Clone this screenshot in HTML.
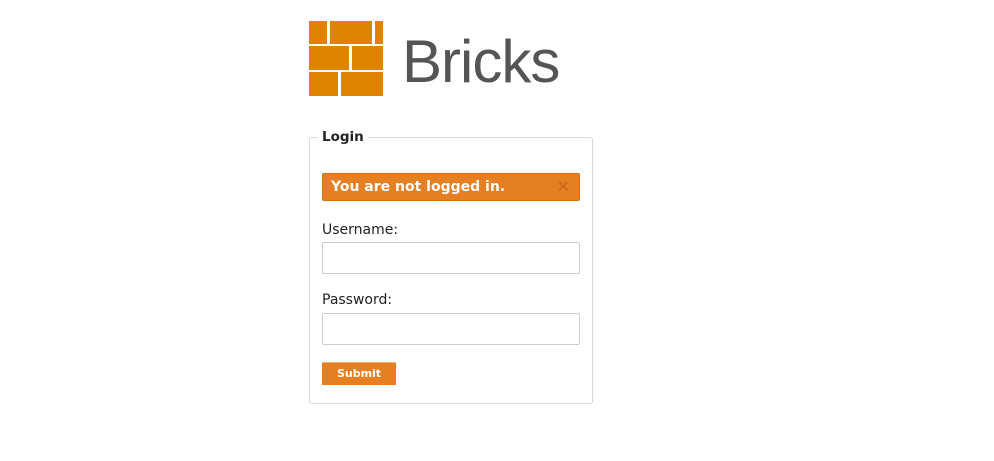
<!DOCTYPE html>
<html><head><style>
body{margin:0;background:#fff;font-family:"DejaVu Sans",sans-serif;font-size:13px;color:#222;}
.b{position:absolute;background:#dd8300;}
.t{position:absolute;left:402px;top:22px;font-family:"Liberation Sans",sans-serif;font-size:60px;color:#555;letter-spacing:-1px;line-height:80px;}
.fs{position:absolute;left:309px;top:137px;width:284px;height:267px;border:1px solid #d8d8d8;border-radius:3px;box-sizing:border-box;}
.lg{position:absolute;left:318px;top:128px;background:#fff;padding:0 4px;font-weight:bold;font-size:13.5px;line-height:18px;}
.al{position:absolute;left:322px;top:173px;width:258px;height:28px;box-sizing:border-box;background:#e67e22;border:1px solid #d3701a;border-radius:2px;color:#fff;font-weight:bold;font-size:14px;line-height:26px;padding-left:8px;}
.al span{position:absolute;right:9px;top:0;color:#c8661a;font-size:16px;}
.lb{position:absolute;left:322px;font-size:14px;}
.in{position:absolute;left:322px;width:258px;height:32px;box-sizing:border-box;border:1px solid #ccc;border-radius:2px;}
.bt{position:absolute;left:322px;top:362px;width:74px;height:23px;background:#e67e22;border-top:1px solid #f4b27a;box-sizing:border-box;color:#fff;font-weight:bold;font-size:11px;text-align:center;line-height:22px;}
</style></head><body>
<div class="b" style="left:309px;top:21px;width:18px;height:23px"></div>
<div class="b" style="left:330px;top:21px;width:42px;height:23px"></div>
<div class="b" style="left:375px;top:21px;width:8px;height:23px"></div>
<div class="b" style="left:309px;top:46px;width:40px;height:24px"></div>
<div class="b" style="left:352px;top:46px;width:31px;height:24px"></div>
<div class="b" style="left:309px;top:72px;width:29px;height:24px"></div>
<div class="b" style="left:341px;top:72px;width:42px;height:24px"></div>
<div class="t">Bricks</div>
<div class="fs"></div>
<div class="lg">Login</div>
<div class="al">You are not logged in.<span>✕</span></div>
<div class="lb" style="top:222px">Username:</div>
<div class="in" style="top:242px"></div>
<div class="lb" style="top:292px">Password:</div>
<div class="in" style="top:313px"></div>
<div class="bt">Submit</div>
</body></html>
